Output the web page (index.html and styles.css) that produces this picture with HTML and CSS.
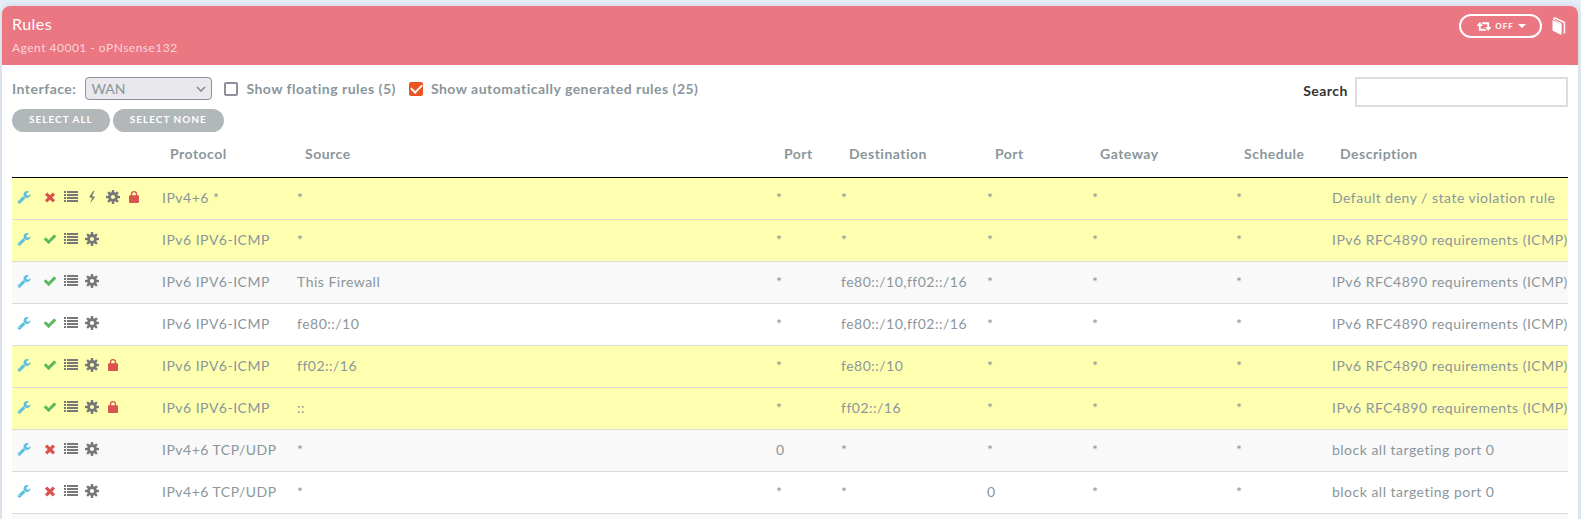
FILE: index.html
```html
<!DOCTYPE html>
<html lang="en">
<head>
<meta charset="utf-8">
<title>Rules</title>
<link rel="stylesheet" href="styles.css">
</head>
<body>
<svg class="sprite" aria-hidden="true">
  <symbol id="wrench" viewBox="0 0 1792 1792"><path d="M448 1472q0-26-19-45t-45-19-45 19-19 45 19 45 45 19 45-19 19-45zm644-420l-682 682q-37 37-90 37-52 0-91-37l-106-108q-38-36-38-90 0-53 38-91l681-681q39 98 114.500 173.500t173.500 114.500zm634-435q0 39-23 106-47 134-164.500 217.500t-258.500 83.500q-185 0-316.500-131.500t-131.500-316.500 131.500-316.500 316.500-131.500q58 0 121.500 16.500t107.500 46.500q16 11 16 28t-16 28l-293 169v224l193 107q5-3 79-48.500t135.500-81 70.500-35.500q15 0 23.500 10t8.500 25z"/></symbol>
  <symbol id="times" viewBox="0 0 14 14"><path d="M4.200 2.400 7 5.200l2.800-2.800 2.300 2.300L9.300 7.500l2.800 2.800-2.300 2.300L7 9.800l-2.800 2.800-2.300-2.300 2.800-2.800-2.800-2.800z"/></symbol>
  <symbol id="check" viewBox="0 0 1792 1792"><path d="M1671 566q0 40-28 68l-724 724-136 136q-28 28-68 28t-68-28l-136-136-362-362q-28-28-28-68t28-68l136-136q28-28 68-28t68 28l294 295 656-657q28-28 68-28t68 28l136 136q28 28 28 68z"/></symbol>
  <symbol id="list" viewBox="0 0 14 14"><path d="M0 1h2v2H0zm3 0h11v2H3zM0 4h2v2H0zm3 0h11v2H3zM0 7h2v2H0zm3 0h11v2H3zM0 10h2v2H0zm3 0h11v2H3z"/></symbol>
  <symbol id="bolt" viewBox="0 0 14 14"><path d="M8.200 1 4 7.200l3.200.6L5 13.500l5.200-6.700-3.200-.6L9.400 1z"/></symbol>
  <symbol id="gear" viewBox="0 0 14 14"><rect x="5.800" y="0" width="2.400" height="4"/><rect x="5.800" y="0" width="2.400" height="4" transform="rotate(45 7 7)"/><rect x="5.800" y="0" width="2.400" height="4" transform="rotate(90 7 7)"/><rect x="5.800" y="0" width="2.400" height="4" transform="rotate(135 7 7)"/><rect x="5.800" y="0" width="2.400" height="4" transform="rotate(180 7 7)"/><rect x="5.800" y="0" width="2.400" height="4" transform="rotate(225 7 7)"/><rect x="5.800" y="0" width="2.400" height="4" transform="rotate(270 7 7)"/><rect x="5.800" y="0" width="2.400" height="4" transform="rotate(315 7 7)"/><path fill-rule="evenodd" d="M7 2.100a4.900 4.900 0 1 0 0 9.800 4.900 4.900 0 0 0 0-9.800zM7 4.900a2.100 2.100 0 1 1 0 4.200 2.100 2.100 0 0 1 0-4.200z"/></symbol>
  <symbol id="lock" viewBox="0 0 14 14"><rect x="2" y="5.300" width="10" height="7.700" rx="1"/><path fill-rule="evenodd" d="M3.900 6V4.100a3.100 3.100 0 0 1 6.200 0V6H8.800V4.100a1.800 1.800 0 0 0-3.600 0V6z"/></symbol>
  <symbol id="refresh" viewBox="0 384 1920 1152"><path d="M1280 1504q0 13-9.500 22.500t-22.500 9.500h-960q-8 0-13.500-2t-9-7-5.500-8-3-11.500-1-11.500v-600h-192q-26 0-45-19t-19-45q0-24 15-41l320-384q19-22 49-22t49 22l320 384q15 17 15 41 0 26-19 45t-45 19h-192v384h576q16 0 25 11l160 192q7 10 7 21zm640-416q0 24-15 41l-320 384q-20 23-49 23t-49-23l-320-384q-15-17-15-41 0-26 19-45t45-19h192v-384h-576q-16 0-25-12l-160-192q-7-9-7-20 0-13 9.500-22.500t22.500-9.500h960q8 0 13.500 2t9 7 5.500 8 3 11.500 1 11.500v600h192q26 0 45 19t19 45z"/></symbol>
  <symbol id="book" viewBox="0 0 14 18"><path d="M.5 3.300 8.700 7v10.700L.5 13.500zM.7 2.200Q1 .5 3.300.3L13.200 5v11.200l-1.500.8V6L3.500 1.900 2.200 2.500 9.600 6.200v11.300l-.9.200V7z"/></symbol>
</svg>

<main class="panel">
  <header class="panel-header">
    <div>
      <h1 class="title">Rules</h1>
      <p class="subtitle">Agent 40001 - oPNsense132</p>
    </div>
    <div class="header-actions">
      <button class="refresh-button" type="button"><svg class="refresh-icon"><use href="#refresh"/></svg>OFF<span class="caret"></span></button>
      <a class="book-link" href="#" aria-label="Documentation"><svg class="book-icon"><use href="#book"/></svg></a>
    </div>
  </header>

  <div class="panel-body">
    <div class="toolbar">
      <div class="filters">
        <label for="interface">Interface:</label>
        <span class="select-wrap">
          <select id="interface" class="select"><option>WAN</option></select>
          <svg class="chevron" viewBox="0 0 10 6"><path d="M1 1l4 4 4-4"/></svg>
        </span>
        <input class="checkbox" type="checkbox" id="floating"><label for="floating">Show floating rules (5)</label>
        <input class="checkbox" type="checkbox" id="generated" checked><label for="generated">Show automatically generated rules (25)</label>
      </div>
      <div class="search">
        <label class="search-label" for="search">Search</label>
        <input class="search-input" type="text" id="search">
      </div>
    </div>
    <div class="select-buttons">
      <button class="pill" type="button">SELECT ALL</button>
      <button class="pill" type="button">SELECT NONE</button>
    </div>

    <table class="rules">
      <colgroup><col class="c-icons"><col class="c-protocol"><col class="c-source"><col class="c-port"><col class="c-destination"><col class="c-dport"><col class="c-gateway"><col class="c-schedule"><col class="c-description"></colgroup>
      <thead>
        <tr><th></th><th>Protocol</th><th>Source</th><th>Port</th><th>Destination</th><th>Port</th><th>Gateway</th><th>Schedule</th><th>Description</th></tr>
      </thead>
      <tbody>
        <tr class="hit"><td><div class="icons"><svg class="icon edit"><use href="#wrench"/></svg><svg class="icon red"><use href="#times"/></svg><svg class="icon"><use href="#list"/></svg><svg class="icon"><use href="#bolt"/></svg><svg class="icon"><use href="#gear"/></svg><svg class="icon red"><use href="#lock"/></svg></div></td><td>IPv4+6 *</td><td>*</td><td>*</td><td>*</td><td>*</td><td>*</td><td>*</td><td>Default deny / state violation rule</td></tr>
        <tr class="hit"><td><div class="icons"><svg class="icon edit"><use href="#wrench"/></svg><svg class="icon green"><use href="#check"/></svg><svg class="icon"><use href="#list"/></svg><svg class="icon"><use href="#gear"/></svg></div></td><td>IPv6 IPV6-ICMP</td><td>*</td><td>*</td><td>*</td><td>*</td><td>*</td><td>*</td><td>IPv6 RFC4890 requirements (ICMP)</td></tr>
        <tr class="odd"><td><div class="icons"><svg class="icon edit"><use href="#wrench"/></svg><svg class="icon green"><use href="#check"/></svg><svg class="icon"><use href="#list"/></svg><svg class="icon"><use href="#gear"/></svg></div></td><td>IPv6 IPV6-ICMP</td><td>This Firewall</td><td>*</td><td>fe80::/10,ff02::/16</td><td>*</td><td>*</td><td>*</td><td>IPv6 RFC4890 requirements (ICMP)</td></tr>
        <tr><td><div class="icons"><svg class="icon edit"><use href="#wrench"/></svg><svg class="icon green"><use href="#check"/></svg><svg class="icon"><use href="#list"/></svg><svg class="icon"><use href="#gear"/></svg></div></td><td>IPv6 IPV6-ICMP</td><td>fe80::/10</td><td>*</td><td>fe80::/10,ff02::/16</td><td>*</td><td>*</td><td>*</td><td>IPv6 RFC4890 requirements (ICMP)</td></tr>
        <tr class="hit"><td><div class="icons"><svg class="icon edit"><use href="#wrench"/></svg><svg class="icon green"><use href="#check"/></svg><svg class="icon"><use href="#list"/></svg><svg class="icon"><use href="#gear"/></svg><svg class="icon red"><use href="#lock"/></svg></div></td><td>IPv6 IPV6-ICMP</td><td>ff02::/16</td><td>*</td><td>fe80::/10</td><td>*</td><td>*</td><td>*</td><td>IPv6 RFC4890 requirements (ICMP)</td></tr>
        <tr class="hit"><td><div class="icons"><svg class="icon edit"><use href="#wrench"/></svg><svg class="icon green"><use href="#check"/></svg><svg class="icon"><use href="#list"/></svg><svg class="icon"><use href="#gear"/></svg><svg class="icon red"><use href="#lock"/></svg></div></td><td>IPv6 IPV6-ICMP</td><td>::</td><td>*</td><td>ff02::/16</td><td>*</td><td>*</td><td>*</td><td>IPv6 RFC4890 requirements (ICMP)</td></tr>
        <tr class="odd"><td><div class="icons"><svg class="icon edit"><use href="#wrench"/></svg><svg class="icon red"><use href="#times"/></svg><svg class="icon"><use href="#list"/></svg><svg class="icon"><use href="#gear"/></svg></div></td><td>IPv4+6 TCP/UDP</td><td>*</td><td>0</td><td>*</td><td>*</td><td>*</td><td>*</td><td>block all targeting port 0</td></tr>
        <tr><td><div class="icons"><svg class="icon edit"><use href="#wrench"/></svg><svg class="icon red"><use href="#times"/></svg><svg class="icon"><use href="#list"/></svg><svg class="icon"><use href="#gear"/></svg></div></td><td>IPv4+6 TCP/UDP</td><td>*</td><td>*</td><td>*</td><td>0</td><td>*</td><td>*</td><td>block all targeting port 0</td></tr>
        <tr class="odd"><td colspan="9"></td></tr>
      </tbody>
    </table>
  </div>
</main>
</body>
</html>
```
FILE: styles.css
```css
* { box-sizing: border-box; }
body {
  margin: 0;
  padding: 6px 3px 0 2px;
  background: #e6eef6;
  color: #8a969c;
  font: 14px/21px Lato, sans-serif;
  letter-spacing: 0.035em;
  overflow: hidden;
}
.sprite { display: none; }
.panel {
  background: #fff;
  border-radius: 8px;
  box-shadow: 0 0 6px rgba(120, 140, 160, 0.25);
}
.panel-header {
  display: flex;
  justify-content: space-between;
  align-items: flex-start;
  padding: 8px 12px 8px 10px;
  background: #eb7782;
  border-radius: 8px 8px 0 0;
  color: #fff;
}
.title { margin: 0; font-size: 16px; line-height: 19px; font-weight: 400; }
.subtitle { margin: 6px 0 0; font-size: 12px; line-height: 18px; color: #fbd5d9; }
.header-actions { display: flex; align-items: center; gap: 10px; }
.refresh-button {
  display: flex;
  align-items: center;
  justify-content: center;
  gap: 4px;
  width: 83px;
  height: 24px;
  padding: 0 0 0 2px;
  border: 2px solid #fff;
  border-radius: 12px;
  background: transparent;
  color: #fff;
  font: 700 8px/12px Lato, sans-serif;
  letter-spacing: 1px;
}
.refresh-icon { width: 14px; height: 9px; fill: #fff; }
.caret { border: 4px solid transparent; border-top-color: #fff; border-bottom: 0; }
.book-link { display: flex; }
.book-icon { width: 14px; height: 18px; fill: #fff; }

.panel-body { padding: 12px 10px 0; }
.toolbar { display: flex; justify-content: space-between; align-items: flex-start; height: 32px; }
.filters { display: flex; align-items: center; font-weight: 700; }
.select-wrap { position: relative; margin: 0 12px 0 9px; }
.select {
  display: block;
  width: 127px;
  height: 23px;
  padding: 0 5px;
  appearance: none;
  border: 1px solid #8f8f9d;
  border-radius: 4px;
  background: #e9e9ed;
  color: #8a969c;
  font: 14px/21px Lato, sans-serif;
}
.chevron { position: absolute; right: 6px; top: 9px; width: 10px; height: 6px; fill: none; stroke: #85858f; stroke-width: 1.5; }
.checkbox {
  display: grid;
  place-items: center;
  appearance: none;
  width: 14px;
  height: 14px;
  margin: 0 8px 0 0;
  border: 2px solid #8f8f9d;
  border-radius: 2px;
  background: #fff;
}
label + .checkbox { margin-left: 13px; }
.checkbox:checked { border-color: #e95420; background: #e95420; }
.checkbox:checked::after {
  content: "";
  width: 9px;
  height: 5px;
  margin-bottom: 2px;
  border: solid #fff;
  border-width: 0 0 2px 2px;
  transform: rotate(-45deg);
}
.search { display: flex; align-items: center; gap: 7px; }
.search-label { padding-bottom: 3px; color: #333; font-weight: 700; }
.search-input { width: 213px; height: 30px; padding: 4px; border: 2px solid #ddd; background: #fff; font: 14px/21px Lato, sans-serif; }
.select-buttons { display: flex; gap: 3px; }
.pill {
  height: 23px;
  padding: 0 17px 2px;
  border: 0;
  border-radius: 12px;
  background: #b2b7ba;
  color: #fff;
  font: 700 10px/21px Lato, sans-serif;
  letter-spacing: 1px;
}

.rules { width: 100%; table-layout: fixed; border-collapse: collapse; }
.c-icons { width: 140px; }
.c-protocol { width: 135px; }
.c-port { width: 65px; }
.c-destination { width: 146px; }
.c-dport { width: 105px; }
.c-gateway { width: 144px; }
.c-schedule { width: 96px; }
.c-description { width: 246px; }
.rules th { height: 45px; padding: 0 18px 2px; border-bottom: 1px solid #000; text-align: left; font-weight: 700; }
.rules td { height: 42px; padding: 0 0 2px 10px; border-bottom: 1px solid #ddd; white-space: nowrap; }
.rules td:first-child { padding-left: 5px; }
.hit { background: #ffffb0; }
.odd { background: #f9f9f9; }
.icons { display: flex; align-items: center; gap: 7px; }
.icon { width: 14px; height: 14px; fill: #777; }
.edit { margin-right: 5px; fill: #5bc0de; }
.red { fill: #d9534f; }
.green { fill: #5cb85c; }
```
